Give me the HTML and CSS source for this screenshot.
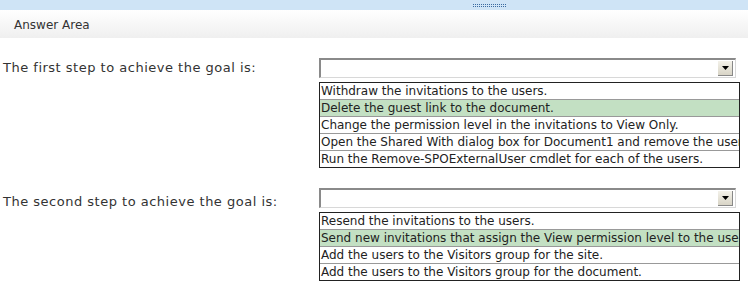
FILE: index.html
```html
<!DOCTYPE html>
<html>
<head>
<meta charset="utf-8">
<link rel="stylesheet" href="styles.css">
</head>
<body>
<div class="topbar"><span class="grip"></span></div>
<div class="header">Answer Area</div>
<div class="content">
  <div class="question q1">
    <div class="label">The first step to achieve the goal is:</div>
    <div class="control">
      <div class="select"><span class="btn"><svg width="7" height="4" viewBox="0 0 7 4"><path d="M0 0H7L3.5 4Z" fill="#000"/></svg></span></div>
      <ul class="list">
        <li>Withdraw the invitations to the users.</li>
        <li class="sel">Delete the guest link to the document.</li>
        <li>Change the permission level in the invitations to View Only.</li>
        <li>Open the Shared With dialog box for Document1 and remove the users.</li>
        <li>Run the Remove-SPOExternalUser cmdlet for each of the users.</li>
      </ul>
    </div>
  </div>
  <div class="question q2">
    <div class="label">The second step to achieve the goal is:</div>
    <div class="control">
      <div class="select"><span class="btn"><svg width="7" height="4" viewBox="0 0 7 4"><path d="M0 0H7L3.5 4Z" fill="#000"/></svg></span></div>
      <ul class="list">
        <li>Resend the invitations to the users.</li>
        <li class="sel">Send new invitations that assign the View permission level to the users.</li>
        <li>Add the users to the Visitors group for the site.</li>
        <li>Add the users to the Visitors group for the document.</li>
      </ul>
    </div>
  </div>
</div>
</body>
</html>
```
FILE: styles.css
```css
html, body {
  margin: 0;
  padding: 0;
  background: #fff;
}
body {
  width: 748px;
  height: 287px;
  overflow: hidden;
  font-family: "DejaVu Sans", Verdana, sans-serif;
}
.topbar {
  height: 10px;
  background: #cfe4f6;
  display: flex;
  justify-content: flex-start;
  align-items: flex-start;
}
.grip {
  margin: 3px 0 0 473px;
  width: 33px;
  height: 5px;
  background:
    repeating-linear-gradient(0deg, #cfe4f6 0 1px, transparent 1px 2px),
    repeating-linear-gradient(90deg, #3b6aa0 0 1px, #cfe4f6 1px 2px);
}
.header {
  height: 28px;
  box-sizing: border-box;
  padding: 6px 0 0 14px;
  background: linear-gradient(#ffffff, #efefef);
  font-size: 12px;
  line-height: 18px;
  color: #333;
}
.content {
  padding-top: 20px;
}
.question {
  display: flex;
}
.q2 {
  margin-top: 20px;
}
.label {
  width: 316px;
  padding-left: 3px;
  font-size: 13px;
  letter-spacing: 0.5px;
  line-height: 20px;
  color: #333;
}
.q2 .label {
  padding-top: 4px;
}
.control {
  display: flex;
  flex-direction: column;
}
.select {
  width: 417px;
  height: 20px;
  box-sizing: border-box;
  border-top: 2px solid #8a8a8a;
  border-left: 2px solid #8a8a8a;
  border-right: 1px solid #d8d8d8;
  border-bottom: 1px solid #d8d8d8;
  background: #fff;
  display: flex;
  justify-content: flex-end;
  align-items: center;
  padding-right: 2px;
}
.btn {
  width: 15px;
  height: 15px;
  box-sizing: border-box;
  background: linear-gradient(#f4f2ea, #d8d4c6);
  border-right: 1px solid #888;
  border-bottom: 1px solid #888;
  display: flex;
  justify-content: center;
  align-items: center;
}
.list {
  list-style: none;
  margin: 4px 0 0 0;
  padding: 0;
  width: 421px;
  box-sizing: border-box;
  border: 1px solid #222;
  font-family: "DejaVu Sans", Tahoma, sans-serif;
  font-size: 12px;
  color: #222;
}
.list li {
  height: 17px;
  line-height: 17px;
  box-sizing: border-box;
  padding-left: 1px;
  border-top: 1px solid #999;
  white-space: nowrap;
  overflow: hidden;
}
.list li:first-child {
  border-top: none;
  height: 16px;
}
.list li.sel {
  background: #c3e0c3;
}
```
